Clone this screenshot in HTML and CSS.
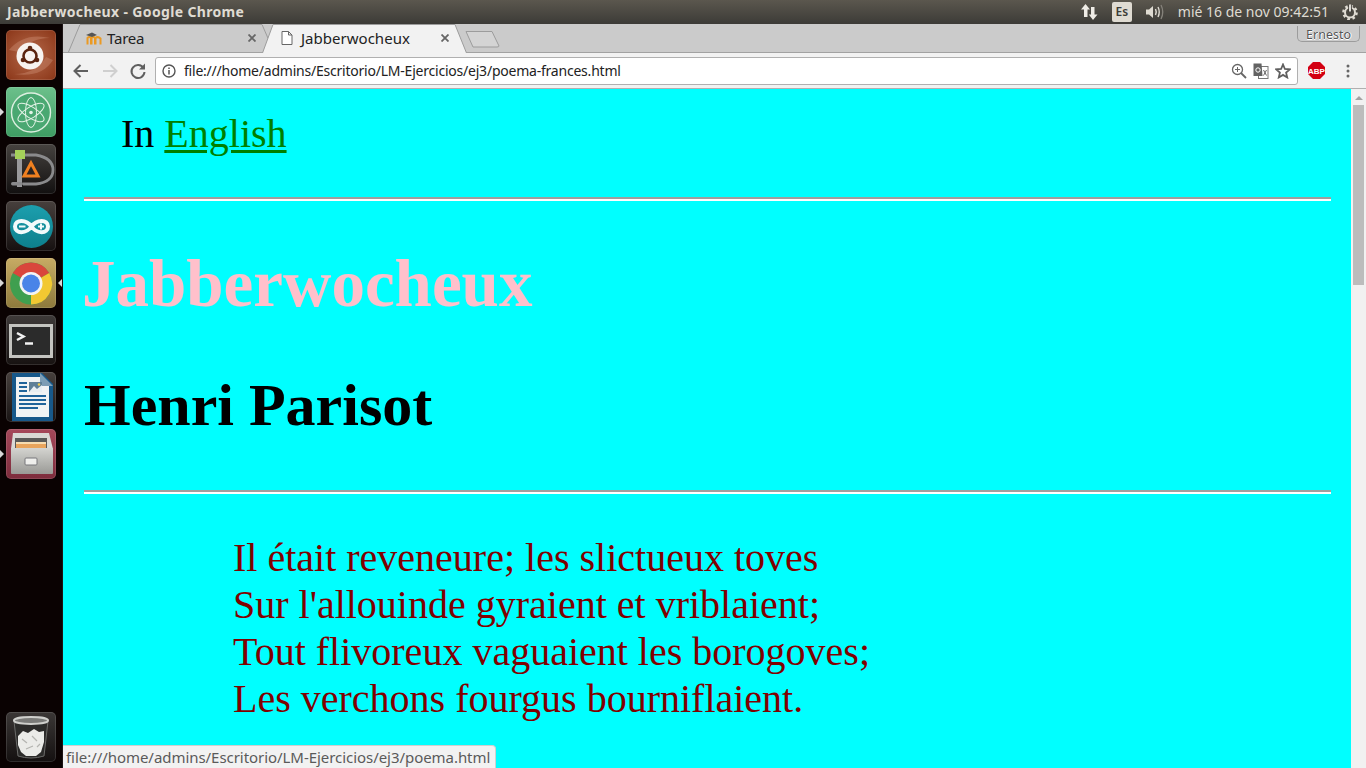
FILE: index.html
```html
<!DOCTYPE html>
<html lang="es">
<head>
<meta charset="utf-8">
<title>Jabberwocheux - Google Chrome</title>
<link rel="stylesheet" href="styles.css">
</head>
<body>
<header class="panel">
  <span class="panel-title">Jabberwocheux - Google Chrome</span>
  <div class="indicators">
    <svg class="ind-net" width="17" height="16" viewBox="0 0 17 16"><path d="M4.500 0 L9 5.500 H6.500 V13 H3 V5.500 H0 Z M12 16 L7.800 10.500 H10 V3 H13.500 V10.500 H16.500 Z" fill="#efece6"/></svg>
    <span class="ind-lang">Es</span>
    <svg class="ind-vol" width="20" height="16" viewBox="0 0 20 16"><path d="M1 5.500 H4 L8 2 V14 L4 10.500 H1 Z" fill="#dfdbd2"/><path d="M10.500 5 Q12 8 10.500 11" stroke="#dfdbd2" stroke-width="1.500" fill="none"/><path d="M13 3 Q15.500 8 13 13" stroke="#dfdbd2" stroke-width="1.400" fill="none"/><path d="M16 1 Q19.500 8 16 15" stroke="#85827b" stroke-width="1.300" fill="none"/></svg>
    <span class="ind-clock">mié 16 de nov 09:42:51</span>
    <svg class="ind-gear" width="16" height="16" viewBox="0 0 16 16"><circle cx="8" cy="8.500" r="5" fill="none" stroke="#dfdbd2" stroke-width="2"/><circle cx="8" cy="8.500" r="6.600" fill="none" stroke="#dfdbd2" stroke-width="2.400" stroke-dasharray="2.600 2.580"/><path d="M8 1 V8" stroke="#3f3d38" stroke-width="3.600"/><path d="M8 0.500 V7.500" stroke="#efece6" stroke-width="1.800"/></svg>
  </div>
</header>
<div class="desktop">
  <nav class="dock">
    <div class="launcher l-ubuntu">
      <svg viewBox="0 0 50 50" width="50" height="50"><path d="M3 20 Q18 2 44 8 Q24 8 13 22 Z M47 30 Q36 48 8 44 Q30 44 40 27 Z" fill="#c98a6e" opacity=".45"/><circle cx="24" cy="26" r="13.500" fill="#f7f3f0"/><circle cx="24" cy="26" r="6.500" fill="none" stroke="#5a2410" stroke-width="2.600"/><circle cx="24" cy="18" r="2.300" fill="#5a2410"/><circle cx="17" cy="30" r="2.300" fill="#5a2410"/><circle cx="31" cy="30" r="2.300" fill="#5a2410"/></svg>
    </div>
    <div class="launcher l-atom pip-left">
      <svg viewBox="0 0 50 50" width="50" height="50"><circle cx="25" cy="25.500" r="19.500" fill="#4aa872" stroke="#dcefe0" stroke-width="1.400"/><g fill="none" stroke="#e4f3e7" stroke-width="1"><ellipse cx="25" cy="25.500" rx="15" ry="5.500" transform="rotate(32 25 25.500)"/><ellipse cx="25" cy="25.500" rx="15" ry="5.500" transform="rotate(-32 25 25.500)"/><ellipse cx="25" cy="25.500" rx="15" ry="5.500" transform="rotate(90 25 25.500)"/></g><circle cx="25" cy="25.500" r="1.800" fill="#e4f3e7"/></svg>
    </div>
    <div class="launcher l-dia">
      <svg viewBox="0 0 50 50" width="50" height="50"><path d="M14 11 H30 Q47 14 47 26 Q47 38 30 40 H17" fill="none" stroke="#8a8a8c" stroke-width="2.800"/><rect x="11" y="13" width="5" height="30" fill="#9a9a9c"/><rect x="5" y="38" width="12" height="3.500" rx="1.700" fill="#8a8a8c"/><rect x="5" y="9.500" width="6" height="3" fill="#8a8a8c"/><rect x="9" y="6" width="10" height="9" fill="#a4d05a"/><path d="M25 19 L32 32 H18 Z" fill="#2a2422" stroke="#f08020" stroke-width="3"/></svg>
    </div>
    <div class="launcher l-arduino">
      <svg viewBox="0 0 50 50" width="50" height="50"><defs><linearGradient id="ard" x1="0" y1="0" x2="0" y2="1"><stop offset="0" stop-color="#1c9fae"/><stop offset="1" stop-color="#0d7f8c"/></linearGradient></defs><circle cx="25.500" cy="25.500" r="21.500" fill="url(#ard)"/><path d="M25.500 25.500 C20.500 18 9 18 9 25.500 C9 33 20.500 33 25.500 25.500 C30.500 18 42 18 42 25.500 C42 33 30.500 33 25.500 25.500 Z" fill="none" stroke="#f2fafb" stroke-width="4"/><path d="M13 25.500 H19.500 M32 25.500 H38 M35 22.500 V28.500" stroke="#f2fafb" stroke-width="2"/></svg>
    </div>
    <div class="launcher l-chrome pip-left pip-right">
      <svg viewBox="0 0 50 50" width="50" height="50"><circle cx="25" cy="25.500" r="21" fill="#3f9f4f"/><path d="M25 25.500 L6.800 15 A21 21 0 0 1 43.200 15 Z" fill="#d9463c"/><path d="M25 25.500 L43.200 15 A21 21 0 0 1 25 46.500 Z" fill="#f2c832"/><circle cx="25" cy="25.500" r="11.500" fill="#f4f4f4"/><circle cx="25" cy="25.500" r="9" fill="#4a84e8"/></svg>
    </div>
    <div class="launcher l-term">
      <svg viewBox="0 0 50 50" width="50" height="50"><rect x="4.500" y="10.500" width="41" height="31" fill="#2b2b2b" stroke="#c4c4c0" stroke-width="3"/><path d="M11 18 L17.500 21.500 L11 25" fill="none" stroke="#f2f2f2" stroke-width="2.500"/><path d="M19 28.500 H27" stroke="#f2f2f2" stroke-width="2.500"/></svg>
    </div>
    <div class="launcher l-writer">
      <svg viewBox="0 0 50 50" width="50" height="50"><path d="M6 1 H36 L47 12 V49 H6 Z" fill="#17588a"/><path d="M10 5 H34 L43 14 V45 H10 Z" fill="#f1f3f4"/><path d="M34 1 L47 14 H34 Z" fill="#7d9db5"/><rect x="23" y="10" width="13" height="10" fill="#5f8098"/><path d="M23 20 L28 14 L31 17 L36 13 V20 Z" fill="#e8eef2"/><circle cx="33" cy="12.500" r="1.200" fill="#f3d04e"/><path d="M13 11 H21 M13 15 H21 M13 19 H21 M13 24 H40 M13 28 H40 M13 32 H40 M13 36 H32" stroke="#1f639a" stroke-width="1.800"/></svg>
    </div>
    <div class="launcher l-files pip-left">
      <svg viewBox="0 0 50 50" width="50" height="50"><defs><linearGradient id="dr" x1="0" y1="0" x2="0" y2="1"><stop offset="0" stop-color="#d4d4d0"/><stop offset="1" stop-color="#9a9a96"/></linearGradient></defs><path d="M7 4 H43 L47 20 H5 Z" fill="#d9d9d5"/><rect x="9" y="9" width="32" height="11" fill="#5a5a58"/><rect x="10" y="13" width="30" height="7" fill="#e8a45c"/><rect x="10" y="13" width="30" height="2" fill="#f6dcb0"/><rect x="5" y="19" width="42" height="26" rx="1" fill="url(#dr)"/><rect x="19" y="29" width="12" height="7" rx="1" fill="#efefec" stroke="#77777a"/></svg>
    </div>
    <div class="dock-spacer"></div>
    <div class="launcher l-trash">
      <svg viewBox="0 0 50 50" width="50" height="50"><path d="M8 9 L12 44 Q25 48 38 44 L42 9 Z" fill="#2c2b2a" stroke="#6a6a68"/><ellipse cx="25" cy="8.500" rx="17" ry="3.400" fill="#7a7a78" stroke="#cfcfcc" stroke-width="2"/><path d="M12 24 L17 19 L22 21 L28 17 L33 20 L38 19 L38 30 L35 40 L30 44 L20 44 L15 40 L12 33 Z" fill="#ebebe8"/><path d="M16 27 L21 31 M26 24 L31 29 M20 37 L27 34 M31 35 L34 32" stroke="#b4b4b0" stroke-width="1.200"/></svg>
    </div>
  </nav>
  <main class="browser">
    <div class="tabstrip">
      <div class="tab tab-back">
        <svg class="tab-shape tab-shape-back" width="207" height="28" viewBox="0 0 207 28"><path d="M0.500 28 L12 0.500 H194 L206 28" fill="#cbcbcb" stroke="#9c9c9c"/></svg>
        <svg class="favicon" width="16" height="13" viewBox="0 0 16 13"><path d="M1.500 12.500 V6 Q3.500 4 5 6 V12.500 M5.500 12.500 V6 Q7.500 4 9 6 V12.500 M9.500 12.500 V6 Q12 4 14.500 6.500 V12.500" fill="none" stroke="#eb9a23" stroke-width="2"/><path d="M0 3 L6 0.500 L11 3 L6 5 Z" fill="#555"/></svg>
        <span class="tab-label">Tarea</span>
        <svg class="tab-close" width="8" height="8" viewBox="0 0 8 8"><path d="M0.500 0.500 L7.500 7.500 M7.500 0.500 L0.500 7.500" stroke="#666" stroke-width="1.800"/></svg>
      </div>
      <div class="tab tab-active">
        <svg class="tab-shape" width="205" height="29" viewBox="0 0 205 29"><path d="M0.500 29 L11 0.500 H193 L204.500 29 Z" fill="#f2f2f2" stroke="none"/><path d="M0.500 29 L11 0.500 H193 L204.500 29" fill="none" stroke="#9c9c9c"/></svg>
        <svg class="page-icon" width="12" height="14" viewBox="0 0 12 14"><path d="M1 0.500 H7.500 L11 4 V13.500 H1 Z M7.500 0.500 V4 H11" fill="#fff" stroke="#666"/></svg>
        <span class="tab-label">Jabberwocheux</span>
        <svg class="tab-close" width="8" height="8" viewBox="0 0 8 8"><path d="M0.500 0.500 L7.500 7.500 M7.500 0.500 L0.500 7.500" stroke="#666" stroke-width="1.800"/></svg>
      </div>
      <svg class="new-tab" width="35" height="18" viewBox="0 0 35 18"><path d="M1 1.500 H27 L34 16 Q34 17 32 17 H8 Z" fill="#d4d4d4" stroke="#9c9c9c"/></svg>
      <span class="profile">Ernesto</span>
    </div>
    <div class="toolbar">
      <svg class="tb-btn" width="18" height="16" viewBox="0 0 18 16"><path d="M16 8 H3 M8.500 2 L2.500 8 L8.500 14" fill="none" stroke="#5f5f5f" stroke-width="2"/></svg>
      <svg class="tb-btn tb-fwd" width="18" height="16" viewBox="0 0 18 16"><path d="M2 8 H15 M9.500 2 L15.500 8 L9.500 14" fill="none" stroke="#cfcfcf" stroke-width="2"/></svg>
      <svg class="tb-btn" width="18" height="18" viewBox="0 0 18 18"><path d="M14.500 6 A6.500 6.500 0 1 0 15.500 10" fill="none" stroke="#5f5f5f" stroke-width="2"/><path d="M16 1.500 V7.500 H10 Z" fill="#5f5f5f"/></svg>
      <div class="omnibox">
        <svg width="14" height="14" viewBox="0 0 14 14"><circle cx="7" cy="7" r="6" fill="none" stroke="#555" stroke-width="1.400"/><path d="M7 6 V10.500 M7 3.500 V5" stroke="#555" stroke-width="1.500"/></svg>
        <span class="url">file:///home/admins/Escritorio/LM-Ejercicios/ej3/poema-frances.html</span>
        <svg class="omni-zoom" width="16" height="16" viewBox="0 0 16 16"><circle cx="6.500" cy="6.500" r="5" fill="none" stroke="#666" stroke-width="1.300"/><path d="M10 10 L15 15" stroke="#666" stroke-width="1.800"/><path d="M4 6.500 H9 M6.500 4 V9" stroke="#666"/></svg>
        <svg class="omni-translate" width="16" height="16" viewBox="0 0 16 16"><rect x="5.500" y="3.500" width="9.500" height="12" fill="#fff" stroke="#777"/><path d="M0.500 0.500 H8.500 L9.500 13 H0.500 Z" fill="#636363"/><circle cx="5" cy="7" r="2.200" fill="none" stroke="#fff"/><path d="M10.500 7 L13.500 12.500 M13.500 7 L10.500 12.500" stroke="#666"/></svg>
        <svg class="omni-star" width="16" height="16" viewBox="0 0 16 16"><path d="M8 1.500 L9.900 6 L14.800 6.400 L11.100 9.600 L12.200 14.400 L8 11.900 L3.800 14.400 L4.900 9.600 L1.200 6.400 L6.100 6 Z" fill="none" stroke="#5f5f5f" stroke-width="1.800"/></svg>
      </div>
      <svg class="abp" width="17" height="17" viewBox="0 0 17 17"><path d="M5 0 H12 L17 5 V12 L12 17 H5 L0 12 V5 Z" fill="#d30012"/><text x="8.500" y="11.500" class="abp-text" text-anchor="middle">ABP</text></svg>
      <svg class="menu-dots" width="4" height="14" viewBox="0 0 4 14"><circle cx="2" cy="2" r="1.500" fill="#666"/><circle cx="2" cy="7" r="1.500" fill="#666"/><circle cx="2" cy="12" r="1.500" fill="#666"/></svg>
    </div>
    <div class="viewport">
      <div class="page">
        <p class="lang">In <a href="#" class="lang-link">English</a></p>
        <hr class="rule">
        <h1 class="title">Jabberwocheux</h1>
        <h2 class="author">Henri Parisot</h2>
        <hr class="rule">
        <p class="verse">Il était reveneure; les slictueux toves<br>Sur l'allouinde gyraient et vriblaient;<br>Tout flivoreux vaguaient les borogoves;<br>Les verchons fourgus bourniflaient.</p>
      </div>
      <div class="scrollbar">
        <div class="sb-arrow"></div>
        <div class="sb-thumb"></div>
      </div>
      <div class="status">file:///home/admins/Escritorio/LM-Ejercicios/ej3/poema.html</div>
    </div>
  </main>
</div>
</body>
</html>
```
FILE: styles.css
```css
* { box-sizing: border-box; }
html, body { margin: 0; height: 100%; overflow: hidden; }
body {
  width: 1366px;
  height: 768px;
  display: flex;
  flex-direction: column;
  font-family: "Noto Sans", "Open Sans", sans-serif;
  background: #0a0202;
}
.panel {
  height: 24px;
  flex: none;
  display: flex;
  align-items: center;
  justify-content: space-between;
  background: linear-gradient(#5b574e, #3c3b37);
  padding: 0 8px 1px 7px;
}
.panel-title { color: #dfdbd2; font-size: 14px; font-weight: 700; letter-spacing: .35px; }
.indicators { display: flex; align-items: center; color: #dfdbd2; font-size: 14px; }
.ind-lang {
  width: 20px; height: 20px; margin: 0 13px 0 14px;
  background: #dfdbd2; color: #3c3b37; border-radius: 2px;
  font-size: 12px; font-weight: 600; display: flex; align-items: center; justify-content: center;
}
.ind-clock { margin: 0 13px 0 13px; }
.desktop { flex: 1; display: flex; min-height: 0; }
.dock {
  width: 63px; flex: none; display: flex; flex-direction: column;
  align-items: flex-start; padding: 6px 0 6px 6px; gap: 7px;
  background: #0a0202;
  border-right: 1px solid #1d1515;
}
.dock-spacer { flex: 1; }
.launcher {
  width: 50px; height: 50px; border-radius: 5px; position: relative; flex: none;
  box-shadow: inset 0 0 0 1px rgba(255,255,255,.12);
}
.launcher svg { display: block; }
.l-ubuntu { background: radial-gradient(circle at 50% 50%, #b5694a, #8a3517); }
.l-atom { background: linear-gradient(#6cc08b, #3e9d63); }
.l-dia { background: linear-gradient(#46423f, #121010); }
.l-arduino { background: linear-gradient(#47403d, #161010); }
.l-chrome { background: linear-gradient(#c7ab64, #8e7a3c); }
.l-term { background: linear-gradient(#3e3a39, #171211); }
.l-writer { background: linear-gradient(#47403d, #191414); }
.l-files { background: linear-gradient(#a5485a, #7d2c3c); }
.l-trash { background: linear-gradient(#3b3736, #141010); }
.pip-left::before {
  content: ""; position: absolute; left: -6px; top: 21px;
  border: 4px solid transparent; border-left-color: #d8d8d8; border-right-width: 0;
}
.pip-right::after {
  content: ""; position: absolute; right: -6px; top: 21px;
  border: 4px solid transparent; border-right-color: #d8d8d8; border-left-width: 0;
}
.browser { flex: 1; display: flex; flex-direction: column; min-width: 0; }
.tabstrip {
  height: 29px; flex: none; display: flex; align-items: flex-end;
  background: #cbcbcb; border-bottom: 1px solid #a2a2a2; position: relative;
  padding-left: 5px;
}
.tab {
  height: 28px; display: flex; align-items: center; font-size: 15px; color: #222; position: relative;
}
.tab-shape { position: absolute; left: 0; bottom: 0; }
.tab-back { width: 194px; padding: 0 6px 0 18px; letter-spacing: -.2px; }
.tab-active { width: 205px; padding: 0 18px 0 19px; letter-spacing: .02px; }
.tab-active .tab-shape { bottom: -1px; }
.tab > :not(.tab-shape) { position: relative; }
.favicon { margin-right: 5px; }
.page-icon { margin-right: 8px; }
.tab-label { flex: 1; }
.new-tab { margin: 0 0 4px -2px; position: relative; }
.profile {
  position: absolute; right: 6px; top: 2px; height: 16px; padding: 0 8px;
  border: 1px solid #9c9c9c; border-top: 0; border-radius: 0 0 5px 5px;
  font-size: 12.500px; color: #555; line-height: 17px; text-shadow: 0 1px 0 #fff, 1px 0 0 #fff;
}
.toolbar {
  height: 36px; flex: none; display: flex; align-items: center;
  background: #f2f2f2; border-bottom: 1px solid #b0b0b0; padding: 0 0 0 9px;
}
.tb-btn { margin-right: 11px; flex: none; }
.tb-fwd { margin-right: 10px; }
.omnibox {
  width: 1143px; height: 28px; margin-left: -3px; display: flex; align-items: center;
  background: #fff; border: 1px solid #b0b0b0; border-radius: 3px; padding: 0 6px;
  font-size: 14px; color: #222; letter-spacing: -.22px;
}
.url { flex: 1; margin-left: 8px; }
.omni-translate { margin: 0 6px 0 6px; }
.abp { margin-left: 10px; flex: none; }
.abp-text { font: 700 8px "Liberation Sans", sans-serif; fill: #fff; }
.menu-dots { margin-left: 21px; flex: none; }
.viewport { flex: 1; min-height: 0; display: flex; position: relative; overflow: hidden; }
.page {
  flex: 1; min-width: 0; background: #0ff; padding: 0 20px 0 21px; overflow: hidden;
  font-family: "Liberation Serif", serif;
}
.lang { margin: 20px 0 0 37px; font-size: 40px; color: #000; line-height: 50px; }
.lang-link { color: #008000; text-decoration-thickness: 3px; text-underline-offset: 3px; }
.rule {
  height: 4px; margin: 38px 0 0;
  border: 0; border-top: 2px solid #9f9f9f; border-bottom: 2px solid #fff;
  background: transparent;
}
.title { margin: 45px 0 0 -2px; font-size: 67px; color: #ffc0cb; line-height: 75px; font-weight: 700; }
.author { margin: 50px 0 0; font-size: 60px; color: #000; line-height: 68px; font-weight: 700; }
.author + .rule { margin-top: 51px; }
.verse { margin: 40px 0 0 149px; font-size: 40px; color: #800000; line-height: 47px; }
.scrollbar { width: 15px; flex: none; background: #f1f1f1; display: flex; flex-direction: column; align-items: center; }
.sb-arrow { margin-top: 7px; border: 4px solid transparent; border-bottom-color: #a3a3a3; border-top-width: 0; }
.sb-thumb { width: 11px; height: 180px; margin-top: 5px; background: #bcbcbc; }
.status {
  position: absolute; left: 0; bottom: 0; height: 23px; padding: 0 5px 0 3px;
  background: #f2f2f2; color: #5a5a5a; font-size: 15px; line-height: 23px; letter-spacing: -.05px;
  border-radius: 0 4px 0 0; border-top: 1px solid #d0d0d0; border-right: 1px solid #d0d0d0;
}
```
